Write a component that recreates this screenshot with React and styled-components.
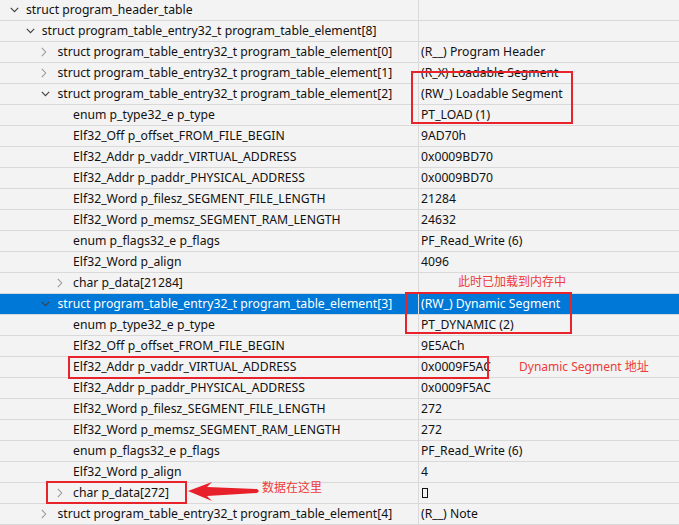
import React from 'react';
import styled, { createGlobalStyle } from 'styled-components';

const GlobalStyle = createGlobalStyle`
  html, body {
    margin: 0;
    padding: 0;
    background: #f3f3f3;
  }
  body {
    font-family: "Noto Sans", "Noto Sans CJK SC", sans-serif;
    font-size: 12.2px;
    color: #111111;
  }
`;

const S = 'struct program_table_entry32_t program_table_element';

const rows = [
  { level: 0, state: 'open', name: 'struct program_header_table', value: '' },
  { level: 1, state: 'open', name: `${S}[8]`, value: '' },
  { level: 2, state: 'closed', name: `${S}[0]`, value: '(R__) Program Header' },
  { level: 2, state: 'closed', name: `${S}[1]`, value: '(R_X) Loadable Segment' },
  { level: 2, state: 'open', name: `${S}[2]`, value: '(RW_) Loadable Segment' },
  { level: 3, name: 'enum p_type32_e p_type', value: 'PT_LOAD (1)' },
  { level: 3, name: 'Elf32_Off p_offset_FROM_FILE_BEGIN', value: '9AD70h' },
  { level: 3, name: 'Elf32_Addr p_vaddr_VIRTUAL_ADDRESS', value: '0x0009BD70' },
  { level: 3, name: 'Elf32_Addr p_paddr_PHYSICAL_ADDRESS', value: '0x0009BD70' },
  { level: 3, name: 'Elf32_Word p_filesz_SEGMENT_FILE_LENGTH', value: '21284' },
  { level: 3, name: 'Elf32_Word p_memsz_SEGMENT_RAM_LENGTH', value: '24632' },
  { level: 3, name: 'enum p_flags32_e p_flags', value: 'PF_Read_Write (6)' },
  { level: 3, name: 'Elf32_Word p_align', value: '4096' },
  { level: 3, state: 'closed', name: 'char p_data[21284]', value: '' },
  { level: 2, state: 'open', name: `${S}[3]`, value: '(RW_) Dynamic Segment', selected: true },
  { level: 3, name: 'enum p_type32_e p_type', value: 'PT_DYNAMIC (2)' },
  { level: 3, name: 'Elf32_Off p_offset_FROM_FILE_BEGIN', value: '9E5ACh' },
  { level: 3, name: 'Elf32_Addr p_vaddr_VIRTUAL_ADDRESS', value: '0x0009F5AC' },
  { level: 3, name: 'Elf32_Addr p_paddr_PHYSICAL_ADDRESS', value: '0x0009F5AC' },
  { level: 3, name: 'Elf32_Word p_filesz_SEGMENT_FILE_LENGTH', value: '272' },
  { level: 3, name: 'Elf32_Word p_memsz_SEGMENT_RAM_LENGTH', value: '272' },
  { level: 3, name: 'enum p_flags32_e p_flags', value: 'PF_Read_Write (6)' },
  { level: 3, name: 'Elf32_Word p_align', value: '4' },
  { level: 3, state: 'closed', name: 'char p_data[272]', value: 'tofu' },
  { level: 2, state: 'closed', name: `${S}[4]`, value: '(R__) Note' },
];

// red markup drawn over the screenshot
const marks = [
  { left: 411, top: 71, width: 162, height: 53 },
  { left: 405, top: 292, width: 167, height: 42 },
  { left: 68, top: 356, width: 421, height: 23 },
  { left: 46, top: 481, width: 141, height: 23 },
];

const notes = [
  { left: 458, top: 274, text: '此时已加载到内存中' },
  { left: 519, top: 359, text: 'Dynamic Segment 地址' },
  { left: 262, top: 480, text: '数据在这里' },
];

const Tree = styled.div`
  position: relative;
  width: 679px;
  height: 525px;
  overflow: hidden;
`;

const Row = styled.div`
  display: grid;
  grid-template-columns: 418px 1fr;
  height: 21px;
  box-sizing: border-box;
  border-bottom: 1px solid #d9d9d9;
  background: ${(p) => (p.$selected ? '#0078d7' : 'transparent')};
  color: ${(p) => (p.$selected ? '#ffffff' : '#111111')};
  line-height: 20px;
  white-space: nowrap;
`;

const NameCell = styled.div`
  display: flex;
  align-items: center;
  padding-left: ${(p) => 10 + p.$level * 15.7}px;
  overflow: hidden;
`;

const Twisty = styled.span`
  width: 16px;
  height: 20px;
  flex: none;
  display: flex;
  align-items: center;
  color: ${(p) => (p.$open ? '#404040' : '#9a9a9a')};
`;

const ValueCell = styled.div`
  border-left: 1px solid #d9d9d9;
  padding-left: 2px;
  overflow: hidden;
`;

const Tofu = styled.span`
  display: inline-block;
  width: 4px;
  height: 8px;
  border: 1px solid #111111;
  margin-left: 1px;
  vertical-align: -1px;
`;

const Mark = styled.div`
  position: absolute;
  border: 2px solid #e8232c;
  box-sizing: border-box;
  pointer-events: none;
`;

const Note = styled.div`
  position: absolute;
  color: #ec3b3b;
  font-size: 12px;
  line-height: 16px;
  white-space: nowrap;
`;

const Arrow = styled.svg`
  position: absolute;
  left: 180px;
  top: 476px;
`;

const Chevron = ({ open }) =>
  open ? (
    <svg width="9" height="6" viewBox="0 0 9 6">
      <polyline points="0.8,0.8 4.5,4.6 8.2,0.8" fill="none" stroke="currentColor" strokeWidth="1.1" />
    </svg>
  ) : (
    <svg width="6" height="10" viewBox="0 0 6 10">
      <polyline points="0.8,0.8 4.7,5 0.8,9.2" fill="none" stroke="currentColor" strokeWidth="1.1" />
    </svg>
  );

export default function App() {
  return (
    <>
      <GlobalStyle />
      <Tree>
        {rows.map((r, i) => (
          <Row key={i} $selected={r.selected}>
            <NameCell $level={r.level}>
              <Twisty $open={r.state === 'open'}>{r.state && <Chevron open={r.state === 'open'} />}</Twisty>
              {r.name}
            </NameCell>
            <ValueCell>{r.value === 'tofu' ? <Tofu /> : r.value}</ValueCell>
          </Row>
        ))}

        {marks.map((m, i) => (
          <Mark key={i} style={m} />
        ))}
        {notes.map((n, i) => (
          <Note key={i} style={{ left: n.left, top: n.top }}>{n.text}</Note>
        ))}

        <Arrow width="84" height="30" viewBox="180 476 84 30">
          <polygon
            points="188,491 212,482 207,487 257,489 259,491 257,493 207,496 212,501"
            fill="#e8202a"
          />
        </Arrow>
      </Tree>
    </>
  );
}
